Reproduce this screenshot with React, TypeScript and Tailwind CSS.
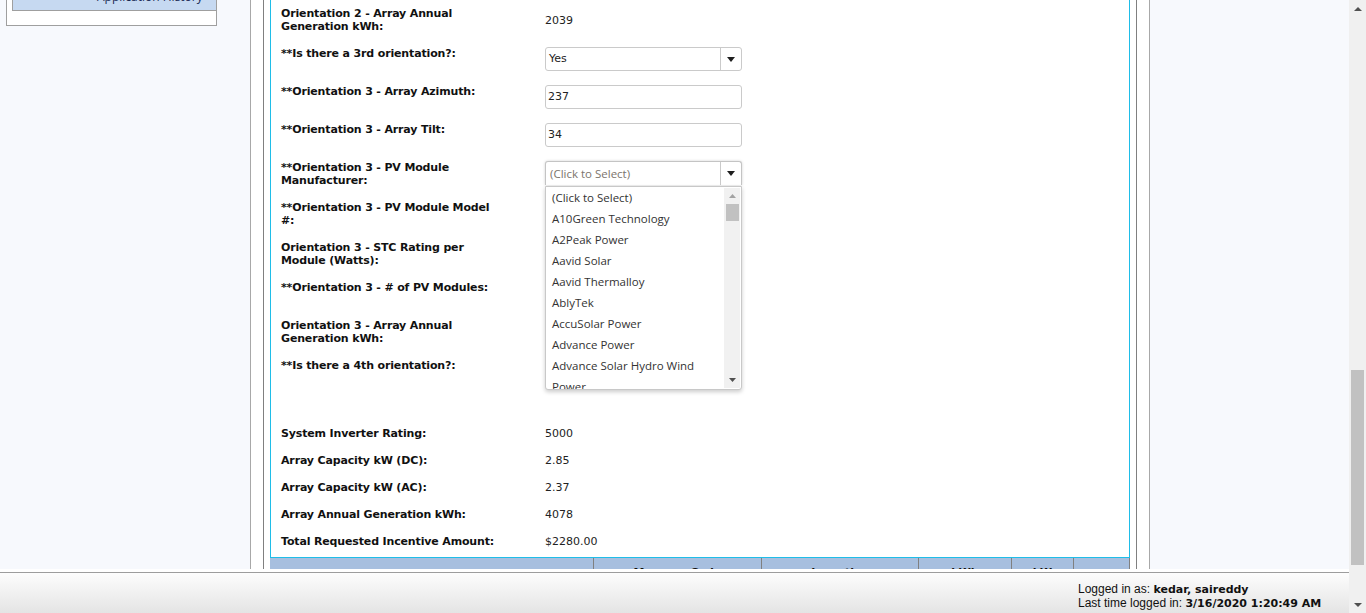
import React from 'react';

const verdana = "font-['DejaVu_Sans',Verdana,sans-serif]";
const segoe = "font-['Open_Sans','Noto_Sans',sans-serif]";

const manufacturers = [
  '(Click to Select)',
  'A10Green Technology',
  'A2Peak Power',
  'Aavid Solar',
  'Aavid Thermalloy',
  'AblyTek',
  'AccuSolar Power',
  'Advance Power',
];

function Row({ label, children, center }: { label: React.ReactNode; children?: React.ReactNode; center?: boolean }) {
  return (
    <div className="flex">
      <div className={`w-[264px] shrink-0 whitespace-nowrap text-[11px] leading-[13px] font-bold tracking-[-0.15px] text-[#111] ${verdana}`}>
        {label}
      </div>
      <div className={center ? 'flex items-center' : ''}>{children}</div>
    </div>
  );
}

function Arrow() {
  return (
    <svg width="8" height="5" viewBox="0 0 8 5">
      <path d="M0 0H8L4 5Z" fill="#1e1e1e" />
    </svg>
  );
}

function Input({ value }: { value?: string }) {
  return (
    <div className={`w-[197px] h-[24px] border border-[#cacaca] rounded-[3px] bg-white flex items-center pl-[2px] pt-[1px] text-[11px] text-[#222] ${verdana}`}>
      {value}
    </div>
  );
}

function Select({ value }: { value?: string }) {
  return (
    <div className="w-[197px] h-[24px] border border-[#cacaca] rounded-[3px] bg-white flex">
      <div className={`flex-1 flex items-center pl-[3px] pt-[1px] text-[11px] text-[#222] ${verdana}`}>{value}</div>
      <div className="w-[21px] border-l border-[#cacaca] flex items-center justify-center">
        <Arrow />
      </div>
    </div>
  );
}

function OpenSelect() {
  return (
    <div className="relative w-[197px] h-[24px] border border-[#c4c4c4] border-b-0 rounded-t-[3px] bg-white flex shadow-[0_0_3px_rgba(0,0,0,0.18)]">
      <div className={`flex-1 flex items-center pl-[4px] text-[11.5px] text-[#7b746c] ${segoe}`}>(Click to Select)</div>
      <div className="w-[21px] border-l border-[#cacaca] flex items-center justify-center">
        <Arrow />
      </div>
      {/* dropdown list */}
      <div className="absolute z-10 top-[24px] left-[-1px] w-[197px] h-[204px] border border-[#c8c8c8] rounded-b-[3px] bg-white shadow-[0_2px_4px_rgba(0,0,0,0.2)] flex overflow-hidden">
        <div className={`flex-1 pl-[6px] text-[11.5px] leading-[21px] text-[#333] ${segoe}`}>
          {manufacturers.map((m) => (
            <div key={m} className="whitespace-nowrap">{m}</div>
          ))}
          <div>
            Advance Solar Hydro Wind
            <br />
            Power
          </div>
        </div>
        <div className="w-[16px] mr-[1px] my-[1px] bg-[#f1f1f1] flex flex-col items-center">
          <div className="h-[16px] flex items-center justify-center">
            <svg width="7" height="4" viewBox="0 0 7 4">
              <path d="M0 4L3.5 0L7 4Z" fill="#a3a3a3" />
            </svg>
          </div>
          <div className="w-[13px] h-[17px] bg-[#c1c1c1]" />
          <div className="flex-1" />
          <div className="h-[16px] flex items-center justify-center">
            <svg width="7" height="4" viewBox="0 0 7 4">
              <path d="M0 0H7L3.5 4Z" fill="#505050" />
            </svg>
          </div>
        </div>
      </div>
    </div>
  );
}

function Value({ children }: { children: React.ReactNode }) {
  return <div className={`text-[11px] leading-[13px] text-[#222] ${verdana}`}>{children}</div>;
}

export default function App() {
  const summary: [string, string][] = [
    ['System Inverter Rating:', '5000'],
    ['Array Capacity kW (DC):', '2.85'],
    ['Array Capacity kW (AC):', '2.37'],
    ['Array Annual Generation kWh:', '4078'],
    ['Total Requested Incentive Amount:', '$2280.00'],
  ];

  return (
    <div className="w-[1366px] h-[613px] flex overflow-hidden bg-[#f7f9fd]">
      <div className="w-[1349px] flex flex-col">
        {/* Content */}
        <div className="h-[569px] flex overflow-hidden">
          {/* Sidebar */}
          <div className="w-[250px] shrink-0">
            <div className="ml-[6px] w-[211px] h-[26px] border-x border-b border-[#9f9f9f] bg-white">
              <div className="ml-[5px] h-[11px] border-l border-b border-[#9f9f9f] bg-[#c6d9f1] overflow-hidden">
                <div className={`mt-[-11px] pl-[84px] text-[12px] leading-[16px] text-[#1b2a55] ${segoe}`}>Application History</div>
              </div>
            </div>
          </div>

          {/* Main panel */}
          <div className="w-[900px] shrink-0 border-x border-[#a8a8a8] bg-white px-[12px]">
            <div className="h-full border-x border-[#808080] px-[6px]">
              <div className="border-x border-b border-[#1fbde8] pl-[10px] pt-[7px] pb-[9px]">
                <div className="flex flex-col gap-[14px]">
                  <Row label={<>Orientation 2 - Array Annual<br />Generation kWh:</>} center>
                    <Value>2039</Value>
                  </Row>
                  <Row label="**Is there a 3rd orientation?:">
                    <Select value="Yes" />
                  </Row>
                  <Row label="**Orientation 3 - Array Azimuth:">
                    <Input value="237" />
                  </Row>
                  <Row label="**Orientation 3 - Array Tilt:">
                    <Input value="34" />
                  </Row>
                  <Row label={<>**Orientation 3 - PV Module<br />Manufacturer:</>}>
                    <OpenSelect />
                  </Row>
                  <Row label={<>**Orientation 3 - PV Module Model<br />#:</>}>
                    <Select />
                  </Row>
                  <Row label={<>Orientation 3 - STC Rating per<br />Module (Watts):</>} />
                  <Row label="**Orientation 3 - # of PV Modules:">
                    <Input />
                  </Row>
                  <Row label={<>Orientation 3 - Array Annual<br />Generation kWh:</>} />
                  <Row label="**Is there a 4th orientation?:">
                    <Select />
                  </Row>
                </div>

                <div className="mt-[44px] flex flex-col gap-[14px]">
                  {summary.map(([l, v]) => (
                    <Row key={l} label={l}>
                      <Value>{v}</Value>
                    </Row>
                  ))}
                </div>
              </div>

              {/* Table header */}
              <div className={`flex h-[22px] bg-[#a7bfdf] border-r border-[#808080] text-[11px] leading-[13px] font-bold text-[#111] ${verdana}`}>
                <div className="w-[323px] shrink-0" />
                <div className="w-[168px] shrink-0 border-l border-[#808080] pt-[8px] text-center">Measure Code</div>
                <div className="w-[157px] shrink-0 border-l border-[#808080] pt-[8px] text-center">Incentive</div>
                <div className="w-[93px] shrink-0 border-l border-[#808080] pt-[8px] text-center">kWh</div>
                <div className="w-[62px] shrink-0 border-l border-[#808080] pt-[8px] text-center">kW</div>
                <div className="flex-1 border-l border-[#808080]" />
              </div>
            </div>
          </div>

          <div className="flex-1" />
        </div>

        {/* Footer */}
        <div className="border-t-[3px] border-white">
          <div className="h-[41px] border-t border-[#9d9d9d] bg-linear-to-b from-[#fdfdfd] to-[#e4e4e4] pl-[1078px] pt-[9px] text-[12px] leading-[13px] text-[#111]">
            <div className="whitespace-nowrap">
              <span className="font-['Liberation_Sans',Arial,sans-serif]">Logged in as: </span>
              <span className={`font-bold text-[11px] ${verdana}`}>kedar, saireddy</span>
            </div>
            <div className="whitespace-nowrap">
              <span className="font-['Liberation_Sans',Arial,sans-serif]">Last time logged in: </span>
              <span className={`font-bold text-[11px] ${verdana}`}>3/16/2020 1:20:49 AM</span>
            </div>
          </div>
        </div>
      </div>

      {/* Page scrollbar */}
      <div className="w-[17px] h-full bg-[#f0f0f0] flex flex-col">
        <div className="h-[17px] flex items-center justify-center">
          <svg width="8" height="4" viewBox="0 0 8 4">
            <path d="M0 4L4 0L8 4Z" fill="#505050" />
          </svg>
        </div>
        <div className="flex-1">
          <div className="mt-[353px] mx-[2px] h-[195px] bg-[#c1c1c1]" />
        </div>
        <div className="h-[17px] flex items-center justify-center">
          <svg width="8" height="4" viewBox="0 0 8 4">
            <path d="M0 0H8L4 4Z" fill="#505050" />
          </svg>
        </div>
      </div>
    </div>
  );
}
